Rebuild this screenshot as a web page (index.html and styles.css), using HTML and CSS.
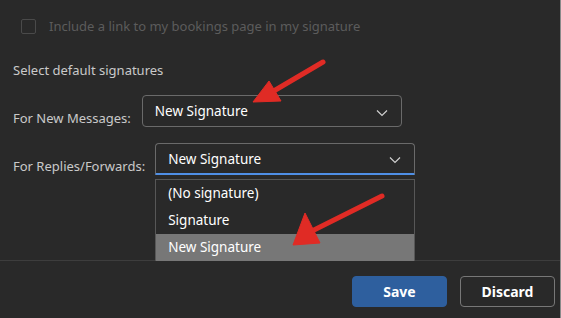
FILE: index.html
```html
<!DOCTYPE html>
<html lang="en">
<head>
  <meta charset="UTF-8" />
  <title>Signature settings</title>
  <link rel="stylesheet" href="styles.css">
</head>
<body>
  <div class="panel">
    <div class="content">
      <label class="check-row">
        <span class="checkbox"></span>
        <span>Include a link to my bookings page in my signature</span>
      </label>

      <div class="section-title">Select default signatures</div>

      <div class="field">
        <span class="field-label">For New Messages:</span>
        <div class="select">
          <span>New Signature</span>
          <svg class="chevron" width="12" height="8" viewBox="0 0 12 8"><path d="M1 1.5 L6 6.5 L11 1.5" fill="none" stroke="#cfcfcf" stroke-width="1.2"/></svg>
        </div>
      </div>

      <div class="field field-open">
        <span class="field-label">For Replies/Forwards:</span>
        <div class="select focused">
          <span>New Signature</span>
          <svg class="chevron" width="12" height="8" viewBox="0 0 12 8"><path d="M1 1.5 L6 6.5 L11 1.5" fill="none" stroke="#cfcfcf" stroke-width="1.2"/></svg>
          <ul class="options">
            <li>(No signature)</li>
            <li>Signature</li>
            <li class="selected">New Signature</li>
          </ul>
        </div>
      </div>
    </div>

    <div class="footer">
      <button class="btn btn-primary">Save</button>
      <button class="btn">Discard</button>
    </div>

    <svg class="annotations" width="561" height="318" viewBox="0 0 561 318">
      <g fill="#e02b25" stroke="#e02b25">
        <line x1="323" y1="62" x2="272" y2="92" stroke-width="5" stroke-linecap="round"/>
        <polygon points="253,102 269,81 281,101" stroke-width="1" stroke-linejoin="round"/>
        <line x1="382" y1="196" x2="310" y2="232" stroke-width="5" stroke-linecap="round"/>
        <polygon points="293,245 305,213 320,243" stroke-width="1" stroke-linejoin="round"/>
      </g>
    </svg>
  </div>
</body>
</html>
```

FILE: styles.css
```css
* { box-sizing: border-box; }

body {
  margin: 0;
  background: #292929;
  font-family: 'Noto Sans', 'Open Sans', sans-serif;
  font-size: 13px;
  color: #c9c9c9;
}

.panel {
  position: relative;
  width: 561px;
  height: 318px;
  border-right: 1px solid #8a8a8a;
  overflow: hidden;
}

.content {
  height: 261px;
  padding: 17px 0 0 13px;
  border-bottom: 1px solid #3d3d3d;
}

.check-row {
  display: flex;
  align-items: center;
  gap: 13px;
  padding-left: 8px;
  color: #5c5c5c;
  font-size: 13px;
}

.checkbox {
  width: 15px;
  height: 15px;
  border: 1px solid #4a4a4a;
  border-radius: 2px;
}

.section-title {
  margin-top: 26px;
}

.field {
  display: flex;
  align-items: flex-end;
  gap: 11px;
  margin-top: 16px;
}

.field-open {
  gap: 10px;
}

.select {
  position: relative;
  width: 260px;
  height: 32px;
  display: flex;
  align-items: center;
  justify-content: space-between;
  padding: 0 13px 0 12px;
  border: 1px solid #6a6a6a;
  border-radius: 4px;
  color: #fff;
  font-size: 13.5px;
}

.select.focused {
  border-bottom: 2px solid #4f8fe6;
  border-radius: 4px 4px 1px 1px;
}

.chevron {
  margin-top: 3px;
}

.options {
  position: absolute;
  top: 35px;
  left: -1px;
  width: 260px;
  margin: 0;
  padding: 0;
  list-style: none;
  background: #292929;
  border: 1px solid #575757;
  border-bottom: none;
  z-index: 2;
}

.options li {
  height: 27px;
  line-height: 26px;
  padding-left: 12px;
  color: #fff;
}

.options li.selected {
  background: #777;
}

.footer {
  display: flex;
  justify-content: flex-end;
  gap: 13px;
  padding: 15px 5px 0 0;
}

.btn {
  width: 95px;
  height: 31px;
  border: 1px solid #777;
  border-radius: 4px;
  background: transparent;
  color: #fff;
  font-family: inherit;
  font-size: 14px;
  font-weight: bold;
}

.btn-primary {
  background: #2e5f9e;
  border-color: #2e5f9e;
}

.annotations {
  position: absolute;
  top: 0;
  left: 0;
  z-index: 3;
  pointer-events: none;
}
```
